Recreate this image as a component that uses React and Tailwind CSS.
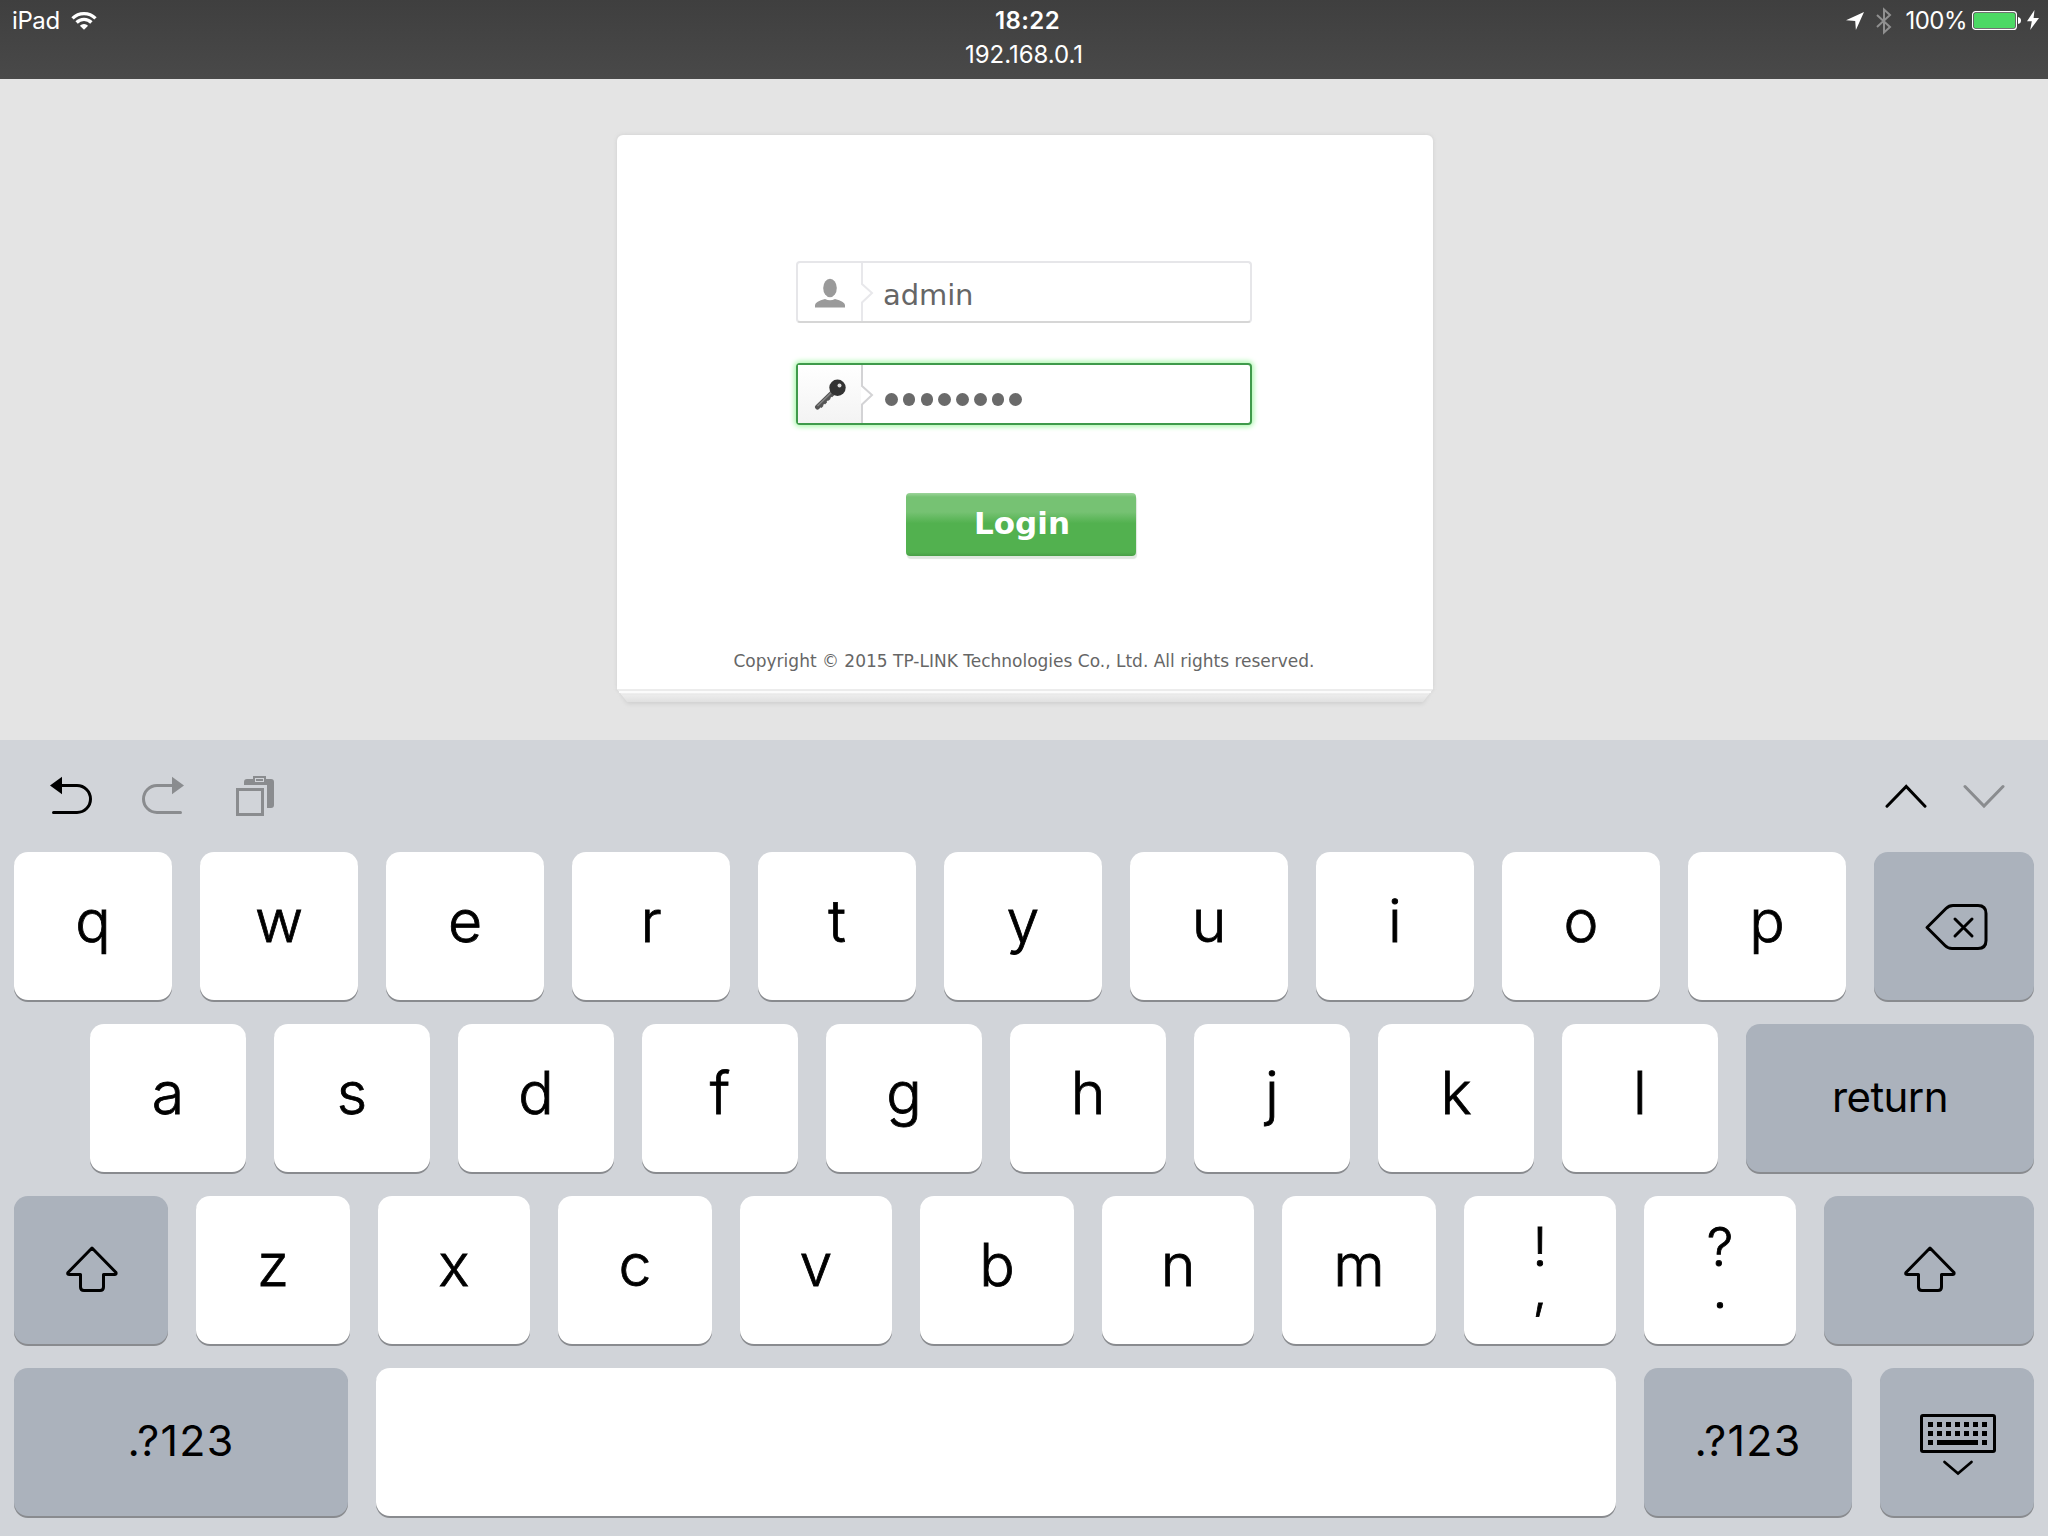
const INTER = "font-['Inter','Liberation_Sans',sans-serif]";

function Key({ w, dark, children, className = "" }) {
  return (
    <div
      className={`h-[148px] shrink-0 rounded-[14px] shadow-[0_2px_0_#898b8f] flex items-center justify-center text-black ${
        dark ? "bg-[#abb2bc]" : "bg-white"
      } ${className}`}
      style={{ width: w }}
    >
      {children}
    </div>
  );
}

function Letter({ w, children }) {
  return (
    <Key w={w}>
      <span className="text-[59px] leading-[60px] pb-[10px] font-light [-webkit-text-stroke:0.8px_black]">{children}</span>
    </Key>
  );
}

function ShiftIcon() {
  return (
    <svg width="54" height="48" viewBox="0 0 54 48" fill="none" stroke="black" strokeWidth="3" strokeLinejoin="round" className="ml-[2px] mb-[2px]">
      <path d="M27 3 L51 27.5 Q51.5 29.5 49.5 29.5 H38.5 V42 Q38.5 45.500 35 45.500 H19 Q15.500 45.500 15.500 42 V29.500 H4.500 Q2 29.500 3 27.500 Z" />
    </svg>
  );
}

function StatusBar() {
  return (
    <header className="h-[79px] shrink-0 bg-linear-to-b from-[#3f3f3f] to-[#494949] text-white grid grid-cols-3 items-start">
      <div className="flex h-[42px] items-center pl-[12px] gap-[12px]">
        <span className="text-[24px] leading-[42px] tracking-[-0.4px]">iPad</span>
        <svg width="26" height="20" viewBox="0 0 26 20" fill="none" stroke="white" strokeWidth="3.300" className="-ml-px">
          <path d="M1.500 7.400 A16.200 16.200 0 0 1 24.500 7.400" />
          <path d="M5.600 11.500 A10.400 10.400 0 0 1 20.400 11.500" />
          <path d="M13 18.800 L8.900 14.700 A5.800 5.800 0 0 1 17.100 14.700 Z" fill="white" stroke="none" />
        </svg>
      </div>
      <div className="flex flex-col items-center pl-[7px]">
        <span className="text-[24px] leading-[42px] font-semibold tracking-[0.4px]">18:22</span>
        <span className="text-[24px] leading-[26px] -ml-[7px] tracking-[-0.050px]">192.168.0.1</span>
      </div>
      <div className="flex h-[42px] items-center justify-end pr-[9px]">
        <svg width="18" height="18" viewBox="0 0 18 18" fill="white" className="mr-[12px]">
          <path d="M18 0 L0 8.300 L9.200 8.900 L9.900 18 Z" />
        </svg>
        <svg width="16" height="28" viewBox="0 0 16 28" fill="none" stroke="#909090" strokeWidth="2" className="mr-[13px]">
          <path d="M1 8 L14 20 L8 25.500 V2.500 L14 8 L1 20" />
        </svg>
        <span className="text-[24px] leading-[42px] mr-[5px] tracking-[-0.5px]">100%</span>
        <svg width="50" height="19" viewBox="0 0 50 19" className="mb-px">
          <rect x="0.600" y="0.600" width="43.800" height="17.800" rx="3" fill="none" stroke="white" strokeWidth="1.200" />
          <rect x="2" y="2" width="41" height="15" rx="1.500" fill="#4cd964" />
          <path d="M46 6 Q49 6.500 49 9.500 Q49 12.500 46 13 Z" fill="white" />
        </svg>
        <svg width="12" height="20" viewBox="0 0 12 20" fill="white" className="ml-[5px] mb-[2px]">
          <path d="M7.500 0 L0 11.300 H4.800 L3.200 20 L12 8 H6.600 Z" />
        </svg>
      </div>
    </header>
  );
}

function UserIcon() {
  return (
    <svg width="32" height="32" viewBox="0 0 32 32" fill="#9a9a9a" className="mt-[2px]">
      <ellipse cx="16" cy="11" rx="6.800" ry="9.200" />
      <path d="M1 30.500 V28 Q1.500 24.500 11 22 Q16 24.500 21 22 Q30.500 24.500 31 28 V30.500 Z" />
    </svg>
  );
}

function KeyIcon() {
  return (
    <svg width="32" height="32" viewBox="0 0 32 32" className="mt-px">
      <path d="M18.500 13.500 L3.500 28" stroke="#555" strokeWidth="5" strokeLinecap="round" />
      <path d="M17.500 13.500 L3.500 27" stroke="#858585" strokeWidth="1.500" />
      <path d="M19.500 15.500 L5.500 29.500" stroke="#555" strokeWidth="2" strokeDasharray="3 2" />
      <circle cx="23.500" cy="8.700" r="8.200" fill="#333" />
      <circle cx="25.500" cy="6.500" r="2" fill="#ddd" />
    </svg>
  );
}

function Field({ focused, icon, children }) {
  return (
    <div
      className={`w-[456px] h-[62px] flex rounded-[4px] bg-white border-2 ${
        focused
          ? "border-[#3f9a4b] shadow-[0_0_5px_2px_#b0f8b2]"
          : "border-[#e6e6e9] border-b-[#d6d6d6]"
      }`}
    >
      <div className={`w-[63px] flex items-center justify-center ${focused ? "bg-linear-to-b from-white to-[#f3f3f3]" : ""}`}>
        {icon}
      </div>
      <svg width="14" height="58" viewBox="0 0 14 58" fill="none" stroke={focused ? "#d3d3d5" : "#e8e8eb"} strokeWidth="2">
        <path d="M1 0 V21 L11 30 L1 39.500 V58" fill="white" />
      </svg>
      {children}
    </div>
  );
}

function LoginCard() {
  return (
    <div className="w-[816px] flex flex-col items-center">
      <div className="w-full h-[554px] bg-white rounded-t-[6px] shadow-[0_0_4px_#cfcfcf] flex flex-col items-center pt-[126px] pr-[2px] text-[#666] font-['DejaVu_Sans','Noto_Sans',sans-serif]">
        <Field icon={<UserIcon />}>
          <span className="pl-[8px] pt-[3px] text-[29px] leading-[58px] tracking-[-0.1px]">admin</span>
        </Field>
        <div className="h-[40px]" />
        <Field focused icon={<KeyIcon />}>
          <div className="flex items-center gap-[5.100px] pl-[10px] pt-[11px]">
            {Array.from({ length: 8 }, (_, i) => (
              <i key={i} className="size-[12.700px] rounded-full bg-[#6a6a6a]" />
            ))}
          </div>
        </Field>
        <button className="mt-[68px] mr-[6px] w-[230px] h-[63px] rounded-[4px] bg-[linear-gradient(#9dd49b_0,#76c273_4px,#76c273_30%,#52b14f_48%,#52b14f_94%,#489f46_100%)] shadow-[1px_3px_1px_#dfe7df] text-white font-bold text-[31px] leading-[60px] pb-[3px] pl-[2px]">
          Login
        </button>
        <p className="mt-[88px] text-[17px] leading-[34px] whitespace-nowrap">
          Copyright © 2015 TP-LINK Technologies Co., Ltd. All rights reserved.
        </p>
      </div>
      <svg width="832" height="22" viewBox="-8 0 832 22" className="block shrink-0">
        <defs>
          <linearGradient id="edge" x1="0" y1="0" x2="0" y2="1">
            <stop offset="0" stopColor="#f6f6f6" />
            <stop offset="1" stopColor="#e0e0e0" />
          </linearGradient>
          <filter id="soft" x="-5%" y="-100%" width="110%" height="300%">
            <feGaussianBlur stdDeviation="2" />
          </filter>
        </defs>
        <path d="M-2 -6 H818 L806 15 H10 Z" fill="#cfcfcf" filter="url(#soft)" />
        <path d="M0 0 H816 L806 13 H10 Z" fill="url(#edge)" />
        <path d="M1 1 H815" stroke="#e8e8e8" strokeWidth="1.500" />
        <path d="M2 3 H814" stroke="#fbfbfb" strokeWidth="2" />
        <path d="M4 5.500 H812" stroke="#e9e9e9" strokeWidth="1" />
      </svg>
    </div>
  );
}

function Toolbar() {
  return (
    <div className="h-[112px] shrink-0 flex items-start pt-[36px]">
      <svg width="42" height="38" viewBox="0 0 42 38" fill="none" stroke="black" strokeWidth="3" className="ml-[50px]">
        <path d="M0 9.500 L12 0.700 V18.300 Z" fill="black" stroke="none" />
        <path d="M11 9.500 H27 A13.500 13.500 0 0 1 27 36.500 H3.500" strokeLinecap="round" />
      </svg>
      <svg width="42" height="38" viewBox="0 0 42 38" fill="none" stroke="#8a8c8f" strokeWidth="3" className="ml-[50px]">
        <path d="M42 9.500 L30 0.700 V18.300 Z" fill="#8a8c8f" stroke="none" />
        <path d="M31 9.500 H15 A13.500 13.500 0 0 0 15 36.500 H38.500" strokeLinecap="round" />
      </svg>
      <svg width="38" height="40" viewBox="0 0 38 40" className="ml-[52px]">
        <path d="M8 9 V6 Q8 3 11 3 H17 V0 H30 V3 H35 Q38 3 38 6 V29 Q38 32 35 32 H31 V9 Z" fill="#8a8c8f" />
        <rect x="19.500" y="2.500" width="8" height="3" fill="none" stroke="#d1d4d9" />
        <rect x="1.500" y="13.500" width="25" height="25" fill="none" stroke="#8a8c8f" strokeWidth="3" />
      </svg>
      <div className="grow" />
      <svg width="42" height="26" viewBox="0 0 42 26" fill="none" stroke="black" strokeWidth="3" className="mt-[7px] mr-[36px]" strokeLinecap="round">
        <path d="M2 23.200 L21.200 3.500 L40 23.200" />
      </svg>
      <svg width="42" height="26" viewBox="0 0 42 26" fill="none" stroke="#8a8c8f" strokeWidth="3" className="mt-[7px] mr-[43px]" strokeLinecap="round">
        <path d="M2 3.500 L21 23 L40 3.500" />
      </svg>
    </div>
  );
}

function Stacked({ w, top, bottom }) {
  return (
    <Key w={w}>
      <div className="flex flex-col items-center text-[53px] font-light [-webkit-text-stroke:0.8px_black] pb-[7px]">
        <span className="leading-[54px]">{top}</span>
        <span className="leading-[40px] -mt-[5px] pb-[4px]">{bottom}</span>
      </div>
    </Key>
  );
}

function WordKey({ w, children, className }) {
  return (
    <Key w={w} dark>
      <span className={`leading-none pb-[3px] ${className}`}>{children}</span>
    </Key>
  );
}

function Keyboard() {
  return (
    <section className="h-[796px] shrink-0 bg-[#d1d4d9]">
      <Toolbar />
      <div className="flex flex-col gap-[24px] pl-[14px]">
        <div className="flex gap-[28px]">
          {[..."qwertyuiop"].map((c) => (
            <Letter key={c} w={158}>{c}</Letter>
          ))}
          <Key w={160} dark>
            <svg width="64" height="48" viewBox="0 0 64 48" fill="none" stroke="black" strokeWidth="3" strokeLinejoin="round" strokeLinecap="round" className="ml-[3px] mt-[2px]">
              <path d="M3 24.500 L22 5.500 Q25 2.500 29 2.500 H54 Q62 2.500 62 10.500 V37.500 Q62 45.500 54 45.500 H28 Q24 45.500 21 42.500 Z" />
              <path d="M31 16 L48 33 M48 16 L31 33" />
            </svg>
          </Key>
        </div>
        <div className="flex gap-[28px] pl-[76px]">
          {[..."asdfghjkl"].map((c) => (
            <Letter key={c} w={156}>{c}</Letter>
          ))}
          <WordKey w={288} className="text-[42px] tracking-[-0.6px]">return</WordKey>
        </div>
        <div className="flex gap-[28px]">
          <Key w={154} dark><ShiftIcon /></Key>
          {[..."zxcvbnm"].map((c, i) => (
            <Letter key={c} w={i % 2 ? 152 : 154}>{c}</Letter>
          ))}
          <Stacked w={152} top="!" bottom="," />
          <Stacked w={152} top="?" bottom="." />
          <Key w={210} dark><ShiftIcon /></Key>
        </div>
        <div className="flex gap-[28px]">
          <WordKey w={334} className="text-[43px] tracking-[1.200px]">.?123</WordKey>
          <Key w={1240} />
          <WordKey w={208} className="text-[43px] tracking-[1.200px]">.?123</WordKey>
          <Key w={154} dark>
            <svg width="76" height="62" viewBox="0 0 76 62" className="mt-[6px] ml-px">
              <rect x="1.500" y="1.500" width="73" height="36" rx="1.500" fill="none" stroke="black" strokeWidth="3" />
              {[0, 1, 2, 3, 4, 5, 6].map((i) => (
                <g key={i}>
                  <rect x={8 + i * 9} y="8" width="5" height="5" />
                  <rect x={8 + i * 9} y="17" width="5" height="5" />
                </g>
              ))}
              <rect x="8" y="26" width="5" height="5" />
              <rect x="17" y="26" width="41" height="5" />
              <rect x="62" y="26" width="5" height="5" />
              <path d="M24.500 48 L38 59.500 L51.500 48" fill="none" stroke="black" strokeWidth="2.700" strokeLinecap="round" />
            </svg>
          </Key>
        </div>
      </div>
    </section>
  );
}

export default function App() {
  return (
    <div className={`w-[2048px] h-[1536px] overflow-hidden flex flex-col bg-[#e4e4e4] ${INTER}`}>
      <StatusBar />
      <main className="h-[661px] shrink-0 flex justify-center pt-[56px] pl-[2px]">
        <LoginCard />
      </main>
      <Keyboard />
    </div>
  );
}
